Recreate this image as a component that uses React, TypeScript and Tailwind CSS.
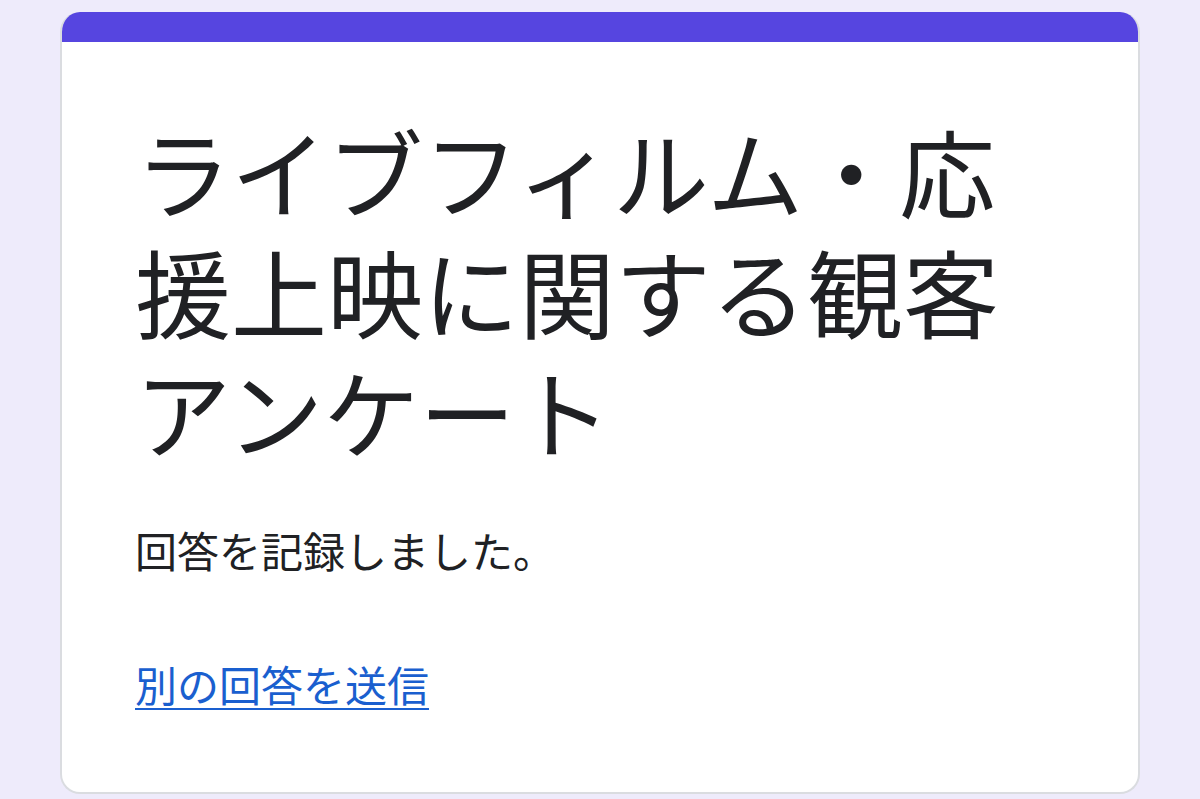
export default function App() {
  return (
    <div
      className="min-h-[799px] bg-[#eeebfb] pt-[12px] px-[60px] overflow-hidden"
      style={{ fontFamily: '"Noto Sans CJK JP", "Noto Sans", sans-serif' }}
    >
      <div className="rounded-[20px] bg-white border-2 border-[#dadce0] border-t-0 overflow-hidden h-[782px]">
        <div className="h-[30px] bg-[#5645e0]" />
        <div className="px-[73px] pt-[68px]">
          <h1 className="text-[96px] leading-[120px] font-normal text-[#202124]">
            ライブフィルム・応援上映に関する観客アンケート
          </h1>
          <p className="mt-[56px] text-[42px] leading-[48px] text-[#202124]">回答を記録しました。</p>
          <a
            href="#"
            className="inline-block mt-[86px] text-[42px] leading-[48px] text-[#1a5fcf] underline underline-offset-[6px] decoration-2"
          >
            別の回答を送信
          </a>
        </div>
      </div>
    </div>
  );
}
